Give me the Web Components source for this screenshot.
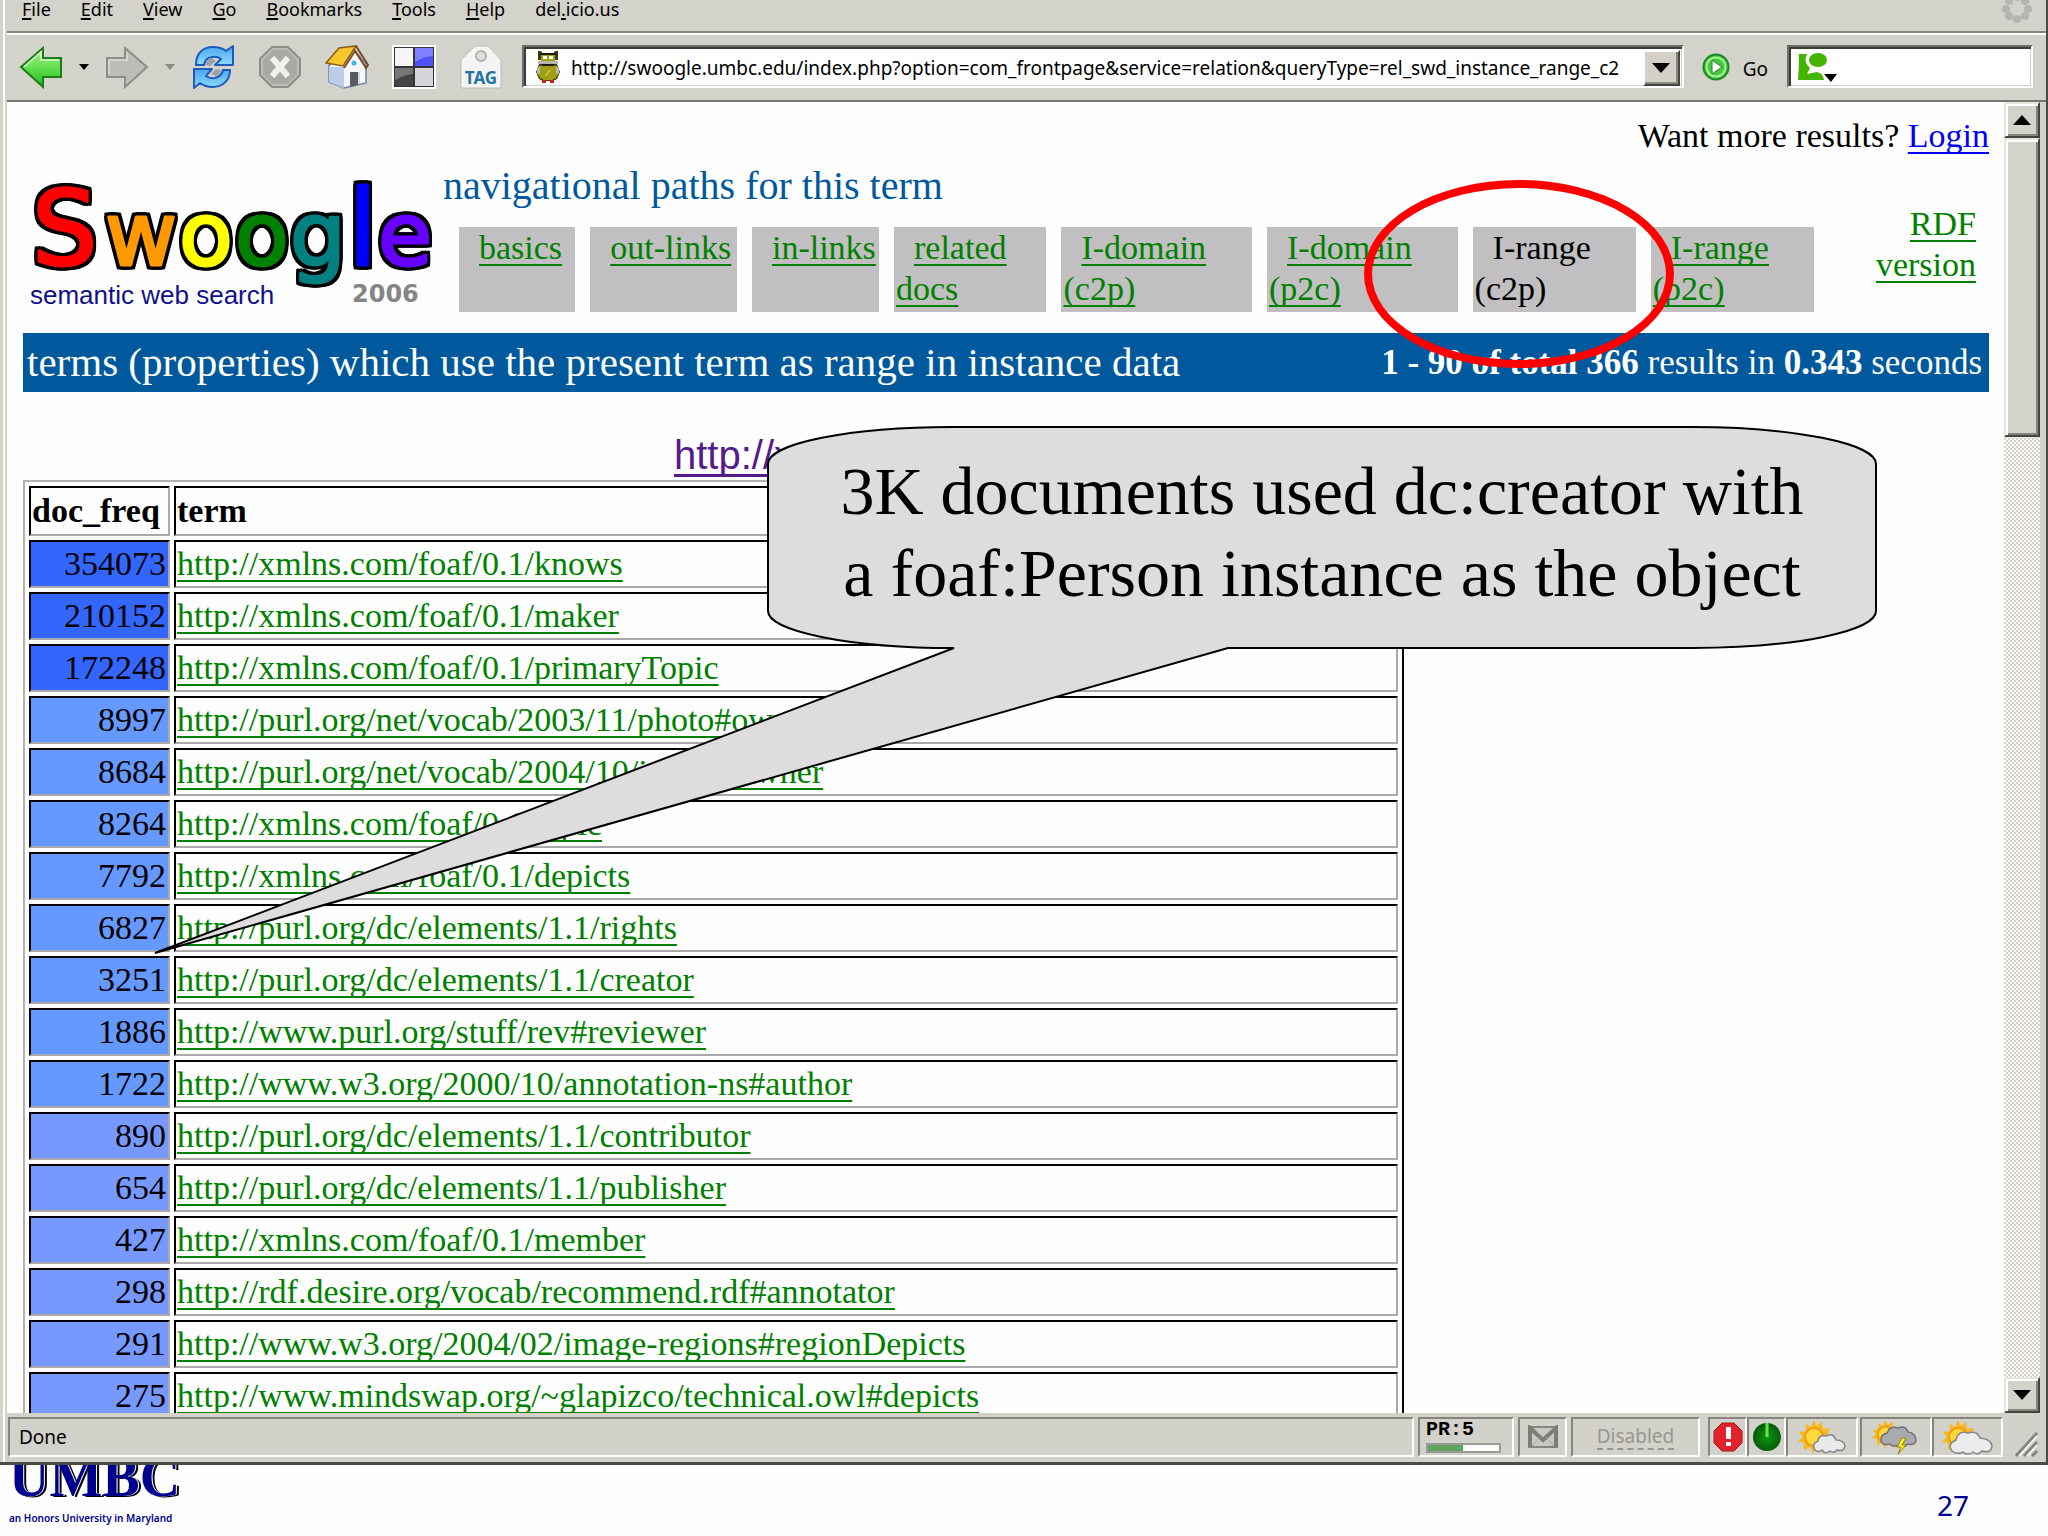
<!DOCTYPE html>
<html lang="en">
<head>
<meta charset="utf-8">
<title>Swoogle: navigational paths</title>
<style>
  html, body { height: 100%; margin: 0; }
  body { background: #fefefe; font-family: "Liberation Serif", "Times New Roman", serif; color: #000; overflow: hidden; }
</style>
</head>
<body>
<slide-page></slide-page>

<script>
const define = (name, html, setup) => customElements.define(name, class extends HTMLElement {
  constructor() {
    super();
    const root = this.attachShadow({ mode: 'open' });
    const t = document.createElement('template');
    t.innerHTML = html;
    root.append(t.content.cloneNode(true));
    if (setup) setup(root, this);
  }
});

/* ---------- menu bar ---------- */
define('menu-bar', `
<style>
  :host { display: block; height: 31px; border-bottom: 2px solid #85857e; box-shadow: 0 2px #fff; font: 18px/18px "Noto Sans", sans-serif; flex: none; }
  nav { display: flex; align-items: flex-start; padding-left: 15px; gap: 30px; }
  button { all: unset; }
  u { text-underline-offset: 2px; text-decoration-thickness: 2px; }
  .throbber { margin-left: auto; margin-right: 14px; display: block; }
</style>
<nav>
  <button><u>F</u>ile</button><button><u>E</u>dit</button><button><u>V</u>iew</button><button><u>G</u>o</button>
  <button><u>B</u>ookmarks</button><button><u>T</u>ools</button><button><u>H</u>elp</button><button>del<u>.</u>icio.us</button>
  <svg class="throbber" width="30" height="24" viewBox="0 0 30 24" fill="#b4b4b0">
    <circle cx="15" cy="-3" r="4"/><circle cx="23" cy="1" r="4"/><circle cx="26" cy="9" r="4"/><circle cx="23" cy="16" r="4"/>
    <circle cx="15" cy="19" r="4"/><circle cx="7" cy="16" r="4"/><circle cx="4" cy="9" r="4"/><circle cx="7" cy="1" r="4"/>
  </svg>
</nav>`);

/* ---------- tool bar ---------- */
define('tool-bar', `
<style>
  :host { display: flex; align-items: center; height: 67px; padding: 0 13px 0 12px; border-bottom: 2px solid #77776f; flex: none; font: 19px/24px "Noto Sans", sans-serif; }
  button { all: unset; display: block; flex: none; }
  svg { display: block; }
  .caret { margin: 0 14px; }
  .gap { margin-right: 23px; }
  .last { margin-right: 19px; }
  .field { display: flex; align-items: center; box-sizing: border-box; height: 43px; background: #fff; border: 2px solid; border-color: #6f6f68 #fff #fff #6f6f68; box-shadow: inset 2px 2px #3c3c3a, inset -1px -1px #d4d3cb; min-width: 0; }
  .url { flex: 1; padding-left: 12px; }
  .search { width: 246px; padding-left: 8px; flex: none; }
  input { all: unset; flex: 1; min-width: 0; color: #000; }
  .url input { margin: 3px 8px 0 11px; overflow: hidden; }
  .drop { width: 37px; height: 36px; margin: 2px 2px 0 0; box-sizing: border-box; background: #d4d0c8; border: 2px solid; border-color: #fff #444 #444 #fff; box-shadow: inset -2px -2px #88887f; display: grid; place-items: center; }
  .go { display: flex; align-items: center; gap: 13px; margin: 0 19px 0 18px; }
  .go span { padding-top: 4px; }
</style>
<button aria-label="Back"><svg width="44" height="44" viewBox="0 0 44 44"><defs><linearGradient id="g" x2="0" y2="1"><stop offset="0" stop-color="#a8f08a"/><stop offset=".5" stop-color="#64e050"/><stop offset="1" stop-color="#22b81a"/></linearGradient></defs><path d="M2 22 24 3v10h18v19H24v10Z" fill="url(#g)" stroke="#1f7d18" stroke-width="2"/><path d="M5 22 22 7v8h18" fill="none" stroke="#d8fccb" stroke-width="1.5"/></svg></button>
<svg class="caret" width="14" height="8" viewBox="0 0 14 8"><path d="M2 1h10L7 7Z"/></svg>
<button aria-label="Forward"><svg width="44" height="44" viewBox="0 0 44 44"><path d="M42 22 20 3v10H2v19h18v10Z" fill="#bdbcb8" stroke="#8d8d88" stroke-width="2"/><path d="M22 7v8H4v14" fill="none" stroke="#dcdbd6" stroke-width="1.5"/></svg></button>
<svg class="caret" width="14" height="8" viewBox="0 0 14 8"><path fill="#8a8a85" d="M2 1h10L7 7Z"/></svg>
<button class="gap" aria-label="Reload"><svg width="44" height="44" viewBox="0 0 44 44"><defs><linearGradient id="b" x2="0" y2="1"><stop offset="0" stop-color="#4ba6ee"/><stop offset="1" stop-color="#8fdcff"/></linearGradient></defs>
<g stroke="#1c5cbf" stroke-width="2" stroke-linejoin="round" fill="url(#b)"><path d="M5 20C5 8 12 2 22 2q8 0 13 4l7-5v19H24l6-6q-4-3-9-2-7 1-8 8Z"/><path d="M39 25c0 11-8 17-17 17q-8 0-13-4l-6 5V24h18l-6 7q4 3 9 2 7-2 8-8Z"/></g><path d="M14 20q2-6 7-7l4 3-6 5ZM30 25q-1 4-5 6l-5-2 5-5Z" fill="#9aa0ac"/></svg></button>
<button class="gap" aria-label="Stop"><svg width="44" height="44" viewBox="0 0 44 44"><path d="M14 2h16l12 12v16L30 42H14L2 30V14Z" fill="#bcbbb6" stroke="#8e8e89" stroke-width="2"/><path d="M15 5h14l10 10v14L29 39H15L5 29V15Z" fill="#aaa9a4"/><path d="m16 15 12 14M28 15 16 29" stroke="#f1f0ec" stroke-width="6" stroke-linecap="square"/></svg></button>
<button class="gap" aria-label="Home"><svg width="44" height="44" viewBox="0 0 44 44"><path d="M4 20v17l15 6 22-5V19L29 5Z" fill="#f4f7fc" stroke="#7083a8" stroke-width="1.5"/><path d="M4 22v15l15 6V22Z" fill="#bccbe6"/><path d="M1 18 14 3l17-2-13 20Z" fill="#f7c62b" stroke="#8b5c16" stroke-width="1.5"/><path d="M31 1 43 20l-2 3L30 6 19 23" fill="none" stroke="#7a4a22" stroke-width="2"/><path d="M25 27h8v13l-8 2Z" fill="#5b5a60"/><path d="M33 27h2v12h-2Z" fill="#d7d7da"/><circle cx="29" cy="18" r="2.5" fill="#3db4ea"/></svg></button>
<button class="gap" aria-label="del.icio.us"><svg width="44" height="44" viewBox="0 0 44 44"><path fill="#fff" d="M0 0h44v44H0z"/><path fill="#33333a" d="M2 2h40v40H2z"/><path fill="#f5f5f5" d="M3 3h18v18H3z"/><path fill="#5050f2" d="M23 3h18v18H23z"/><path fill="#8080ff" d="M23 3h18v8q-9 0-18 6z"/><path fill="#444" d="M3 23h18v18H3z"/><path fill="#777" d="M3 23h18v6q-9 1-18 6z"/><path fill="#d5d5da" d="M23 23h18v18H23z"/></svg></button>
<button class="last" aria-label="Tag"><svg width="44" height="44" viewBox="0 0 44 44"><path d="M2 43V15L14 3q2-2 4-2h9q2 0 4 2l11 12v28Z" fill="#f4f4f3" stroke="#bdbdbb"/><circle cx="22" cy="11" r="5" fill="#dededc" stroke="#b0b0ae" stroke-width="2"/><text x="22" y="39" text-anchor="middle" font-family="Noto Sans, sans-serif" font-size="17" font-weight="700" fill="#2173a6">TAG</text></svg></button>
<div class="field url">
  <svg width="24" height="32" viewBox="0 0 24 32"><path fill="#3a3a14" d="M2 0h3l2 3h10l2-3h3v9h-3v4h2l3 8-3 7-4 2H7l-4-2-3-7 3-8h2V9H2Z"/><path fill="#a0a012" d="M5 4h14v6H5zM3 15q9-3 18 0l2 6-3 6-4 2H8l-4-2-3-6Z"/><path fill="#b5b5ae" d="M2 10h20v3H2zM1 16h3v7H1zM20 16h3v7h-3z"/><path fill="#1b1b12" d="M4 2h16v2H4zM6 13h12v2H6z"/><path fill="#ffe" d="M7 5h4v3H7zM13 5h4v3h-4z"/><path fill="#c8c860" d="m9 24 5-6 1 1-5 6z"/><path fill="#c8211a" d="M6 29h4v3H6zM14 29h4v3h-4z"/></svg>
  <input aria-label="Address" value="http://swoogle.umbc.edu/index.php?option=com_frontpage&amp;service=relation&amp;queryType=rel_swd_instance_range_c2">
  <button class="drop" aria-label="Show history"><svg width="18" height="10" viewBox="0 0 18 10"><path d="M0 0h18L9 10Z"/></svg></button>
</div>
<button class="go"><svg width="28" height="28" viewBox="0 0 28 28"><circle cx="14" cy="14" r="12.5" fill="#48c83e" stroke="#1b8a22" stroke-width="2"/><circle cx="14" cy="14" r="9.5" fill="none" stroke="#a5f094" stroke-width="2"/><path d="M10 7v14l10-7Z" fill="#fff" stroke="#18801c"/></svg><span>Go</span></button>
<div class="field search">
  <svg width="42" height="30" viewBox="0 0 42 30"><path d="M2 2h8q-4 8 3 14l-3 6 10-2q6 1 7 8H1q1-13 1-26Z" fill="#44b400"/><ellipse cx="21" cy="8" rx="9" ry="7" fill="#44b400"/><path d="M27 22h13l-6 8Z"/></svg>
  <input aria-label="Search">
</div>`);

/* ---------- scroll bar ---------- */
define('scroll-bar', `
<style>
  :host { display: flex; flex-direction: column; width: 36px; flex: none; margin-right: 6px; background: repeating-conic-gradient(#fff 0 25%, #d4d0c8 0 50%) 0 0/4px 4px; }
  button { all: unset; display: grid; place-items: center; height: 36px; }
  button, .thumb { box-sizing: border-box; background: #d3d2cb; border: 2px solid; border-color: #e6e5e0 #44443f #44443f #e6e5e0; box-shadow: inset 2px 2px #fff, inset -2px -2px #85857e; }
  .thumb { height: 299px; }
  .track { flex: 1; }
</style>
<button aria-label="Scroll up"><svg width="18" height="10" viewBox="0 0 18 10"><path d="M0 10h18L9 0Z"/></svg></button>
<div class="thumb"></div><div class="track"></div>
<button aria-label="Scroll down"><svg width="18" height="10" viewBox="0 0 18 10"><path d="M0 0h18L9 10Z"/></svg></button>`);

/* ---------- Swoogle logo ---------- */
define('swoogle-logo', `
<style>
  :host { display: block; width: 410px; flex: none; }
  svg { display: block; overflow: visible; }
  .word { font-family: "DejaVu Sans", sans-serif; stroke-width: 3px; stroke-linejoin: round;
    filter: drop-shadow(3px 0 0 #000) drop-shadow(-3px 0 0 #000) drop-shadow(0 3px 0 #000) drop-shadow(0 -3px 0 #000); }
</style>
<svg width="410" height="130" viewBox="0 0 410 130" role="img" aria-label="Swoogle semantic web search 2006">
  <g class="word" font-size="88">
    <text y="84"><tspan x="9" font-size="103" fill="#f00" stroke="#f00">S</tspan><tspan x="82" fill="#ff9900" stroke="#ff9900">w</tspan><tspan x="156" fill="#ff0" stroke="#ff0">o</tspan><tspan x="212" fill="#008000" stroke="#008000">o</tspan><tspan x="267" fill="#008080" stroke="#008080">g</tspan><tspan x="325" font-size="106" fill="#00f" stroke="#00f">l</tspan><tspan x="355" fill="#60f" stroke="#60f">e</tspan></text>
  </g>
  <text x="7" y="123" font-family="Liberation Sans, sans-serif" font-size="26" fill="#10108c">semantic web search</text>
  <text x="329" y="121" font-family="DejaVu Sans, sans-serif" font-weight="700" font-size="24" fill="#858585">2006</text>
</svg>`);

/* ---------- navigation tab ---------- */
define('path-tab', `
<style>
  :host { display: block; box-sizing: border-box; height: 85px; background: #c1bfc1; padding: 0 2px; font-size: 34px; line-height: 41px; text-indent: 18px; flex: 1 1 0; color: #008000; }
  :host([current]) { color: #000; }
  a { color: inherit; text-decoration-thickness: 2px; text-underline-offset: 5px; text-decoration-skip-ink: none; }
</style>
<a><slot></slot></a>`, (root, host) => {
  if (!host.hasAttribute('current')) root.querySelector('a').href = '#';
});

/* ---------- results table ---------- */
const rows = [
  ['354073', 'http://xmlns.com/foaf/0.1/knows'],
  ['210152', 'http://xmlns.com/foaf/0.1/maker'],
  ['172248', 'http://xmlns.com/foaf/0.1/primaryTopic'],
  ['8997', 'http://purl.org/net/vocab/2003/11/photo#owner'],
  ['8684', 'http://purl.org/net/vocab/2004/10/image#owner'],
  ['8264', 'http://xmlns.com/foaf/0.1/topic'],
  ['7792', 'http://xmlns.com/foaf/0.1/depicts'],
  ['6827', 'http://purl.org/dc/elements/1.1/rights'],
  ['3251', 'http://purl.org/dc/elements/1.1/creator'],
  ['1886', 'http://www.purl.org/stuff/rev#reviewer'],
  ['1722', 'http://www.w3.org/2000/10/annotation-ns#author'],
  ['890', 'http://purl.org/dc/elements/1.1/contributor'],
  ['654', 'http://purl.org/dc/elements/1.1/publisher'],
  ['427', 'http://xmlns.com/foaf/0.1/member'],
  ['298', 'http://rdf.desire.org/vocab/recommend.rdf#annotator'],
  ['291', 'http://www.w3.org/2004/02/image-regions#regionDepicts'],
  ['275', 'http://www.mindswap.org/~glapizco/technical.owl#depicts']
];
const shade = n => n > 10000 ? '#3366ff' : n > 1000 ? '#6699ff' : '#7799ff';
define('term-table', `
<style>
  :host { display: block; width: 70.25%; }
  table { width: 100%; border-collapse: separate; border-spacing: 4px; border: 2px solid; border-color: #b3b1b3 #000 #000 #b3b1b3; font-size: 34px; line-height: 40px; box-sizing: border-box; }
  th, td { border: 2px solid; border-color: #000 #aaa8aa #aaa8aa #000; padding: 0 1px; height: 44px; white-space: nowrap; text-align: left; }
  th { height: 46px; }
  th:first-child, td:first-child { width: 134px; }
  td:first-child { text-align: right; padding-right: 2px; }
  a { color: #008000; text-decoration-thickness: 2px; text-underline-offset: 5px; text-decoration-skip-ink: none; }
</style>
<table><thead><tr><th>doc_freq</th><th>term</th></tr></thead><tbody></tbody></table>`, root => {
  root.querySelector('tbody').innerHTML = rows.map(([n, u]) =>
    `<tr><td style="background:${shade(+n)}">${n}</td><td><a href="#">${u}</a></td></tr>`).join('');
});

/* ---------- result page ---------- */
define('result-page', `
<style>
  :host { display: block; flex: 1; min-width: 0; overflow: hidden; background: #fefefe; padding: 0 15px 0 16px; font-size: 34px; line-height: 41px; }
  a { text-decoration-thickness: 2px; text-underline-offset: 5px; text-decoration-skip-ink: none; }
  .top { text-align: right; padding-top: 13px; }
  .top a { color: #00f; }
  header { display: flex; margin-top: 6px; }
  swoogle-logo { margin-top: 19px; }
  .paths { flex: 1; min-width: 0; padding-left: 10px; }
  h1 { margin: 0; font-weight: 400; font-size: 40px; line-height: 48px; color: #00599c; }
  .tabs { display: flex; gap: 15px; margin: 17px 0 0 16px; }
  .rdf { width: 175px; flex: none; padding: 41px 13px 0 0; box-sizing: border-box; text-align: right; }
  .rdf a { color: #008000; }
  .bar { display: flex; justify-content: space-between; align-items: center; height: 59px; margin-top: 21px; padding: 0 7px 0 4px; background: #00599c; color: #fff; white-space: nowrap; }
  h2 { margin: 0; font-weight: 400; font-size: 41px; }
  .bar span { font-size: 35px; }
  .subject { margin: 39px 0 0 651px; height: 49px; line-height: 48px; font-family: "Liberation Sans", Arial, sans-serif; font-size: 40px; white-space: nowrap; }
  .subject a { color: #551a8b; text-decoration-thickness: 3px; }
</style>
<div class="top">Want more results? <a href="#">Login</a></div>
<header>
  <swoogle-logo></swoogle-logo>
  <div class="paths">
    <h1>navigational paths for this term</h1>
    <div class="tabs">
      <path-tab style="flex-grow:115">basics</path-tab><path-tab style="flex-grow:146">out-links</path-tab><path-tab style="flex-grow:126">in-links</path-tab><path-tab style="flex-grow:152">related docs</path-tab><path-tab style="flex-grow:191">I-domain (c2p)</path-tab><path-tab style="flex-grow:191">I-domain (p2c)</path-tab><path-tab current style="flex-grow:163">I-range (c2p)</path-tab><path-tab style="flex-grow:163">I-range (p2c)</path-tab>
    </div>
  </div>
  <div class="rdf"><a href="#">RDF version</a></div>
</header>
<div class="bar"><h2>terms (properties) which use the present term as range in instance data</h2><span><b>1 - 90 of total 366</b> results in <b>0.343</b> seconds</span></div>
<div class="subject"><a href="#">http://xmlns.com/foaf/0.1/Person</a></div>
<term-table></term-table>`);

/* ---------- status bar ---------- */
const sun = '<path d="M17 1l3 6 5-4 1 7 7-1-3 6 6 3-6 3 3 6-7-1-1 7-5-4-4 5-3-6-6 3v-7l-6-2 5-4-4-5 7-1 0-7 5 3Z" fill="#f6b820"/><circle cx="17" cy="18" r="9" fill="#ffd83c" stroke="#f09a10" stroke-width="2"/>';
define('status-bar', `
<style>
  :host { display: flex; align-items: stretch; height: 40px; padding: 4px 0 5px 1px; gap: 4px; background: #d2d1ca; flex: none; font: 19px/24px "Noto Sans", sans-serif; }
  .p { display: flex; align-items: center; box-sizing: border-box; border: 2px solid; border-color: #85857e #fff #fff #85857e; flex: none; justify-content: center; }
  .done { flex: 1; justify-content: flex-start; padding-left: 9px; }
  .rank { width: 96px; flex-direction: column; align-items: flex-start; padding-left: 6px; font: 700 20px/18px "Liberation Mono", monospace; gap: 4px; }
  .meter { width: 75px; height: 10px; box-sizing: border-box; border: 2px solid #9a9a94; background: linear-gradient(90deg, #5fa35f 50%, #fff 0); }
  .mail { width: 49px; }
  .off { width: 129px; color: #96968f; }
  .off span { border-bottom: 2px dashed #96968f; line-height: 24px; }
  .icons { display: flex; margin-left: 4px; }
  .grip { align-self: flex-end; margin: 0 7px 0 8px; }
  svg { display: block; }
</style>
<div class="p done">Done</div>
<div class="p rank"><span>PR:5</span><div class="meter"></div></div>
<div class="p mail"><svg width="32" height="24" viewBox="0 0 32 24"><path d="M2 2h28v20H2z" fill="#c9c9c3" stroke="#85857f" stroke-width="2"/><path d="M3 22V3l13 12L29 3v19" fill="none" stroke="#7d7d78" stroke-width="4"/><path d="m5 21 8-9M27 21l-8-9" stroke="#a5a5a0"/></svg></div>
<div class="p off"><span>Disabled</span></div>
<div class="icons">
  <div class="p" style="width:39px"><svg width="30" height="30" viewBox="0 0 30 30"><path d="M9 1h12l8 8v12l-8 8H9l-8-8V9Z" fill="#e2232b" stroke="#a81c20"/><path d="M13 5h5v12h-5zM13 20h5v4h-5z" fill="#fff"/></svg></div>
  <div class="p" style="width:39px"><svg width="30" height="30" viewBox="0 0 30 30"><defs><radialGradient id="o"><stop offset="0" stop-color="#0d9c12"/><stop offset="1" stop-color="#045a08"/></radialGradient></defs><circle cx="15" cy="15" r="14" fill="url(#o)"/><path d="M15 15V1" stroke="#6fe04a" stroke-width="3"/></svg></div>
  <div class="p" style="width:72px"><svg width="50" height="36" viewBox="0 0 50 36">${sun}<path d="M18 31q-4-6 3-9 1-7 8-5 7-4 10 4 8 0 9 6-1 6-8 4-3 4-7 1-5 4-8-1-4 3-7 0Z" fill="#e9e9ec" stroke="#85858a" stroke-width="1.5"/></svg></div>
  <div class="p" style="width:72px;margin-left:2px"><svg width="50" height="36" viewBox="0 0 50 36"><g transform="scale(.85)">${sun}</g><path d="M10 22q-1-6 6-8 3-8 11-5 8-3 10 4 8 1 8 9-2 5-8 3-4 4-9 1-5 3-9-1-7 2-9-3Z" fill="#a9a9ae" stroke="#707075" stroke-width="1.5"/><path d="m31 19-5 9h4l-3 7 8-9h-4l4-7Z" fill="#ffee1c" stroke="#8d8512"/></svg></div>
  <div class="p" style="width:71px"><svg width="54" height="36" viewBox="0 0 54 36">${sun}<path d="M11 32q-5-7 4-11 2-10 12-7 9-3 12 5 11 1 12 8-1 8-10 5-4 5-9 1-6 4-10 0-6 3-11-1Z" fill="#ececef" stroke="#85858a" stroke-width="1.5"/></svg></div>
</div>
<svg class="grip" width="24" height="28" viewBox="0 0 24 28"><path d="M1 27 22 4M9 27l13-14M17 27l5-5" stroke="#85857e" stroke-width="3"/><path d="M4 27 22 7M12 27l10-11" stroke="#fff" stroke-width="1.5"/></svg>`);

/* ---------- browser window ---------- */
define('browser-window', `
<style>
  :host { display: flex; flex-direction: column; flex: 1; min-height: 0; background: #d3d2cb; border-bottom: 3px solid #4a4a48; border-right: 2px solid #4a4a48; box-shadow: inset 3px 0 #d3d2cb, inset 5px 0 #fff; padding: 0 0 0 7px; }
  main { display: flex; flex: 1; min-height: 0; }
</style>
<menu-bar></menu-bar>
<tool-bar></tool-bar>
<main><result-page></result-page><scroll-bar></scroll-bar></main>
<status-bar></status-bar>`);

/* ---------- speech callout ---------- */
define('speech-callout', `
<style>
  :host { display: block; position: absolute; left: 767px; top: 426px; width: 1110px; height: 223px; }
  svg { position: absolute; inset: 0; overflow: visible; }
  p { position: relative; margin: 0; padding: 24px 60px 0; text-align: center; font-size: 68px; line-height: 82px; }
</style>
<svg width="1110" height="223" viewBox="0 0 1110 223"><path d="M185 1H925A184 37 0 0 1 1109 38V185A184 37 0 0 1 925 222H461L-612 527 187 222A186 37 0 0 1 1 185V38A184 37 0 0 1 185 1Z" fill="#dedcdd" stroke="#000" stroke-width="2"/></svg>
<p><slot></slot></p>`);

/* ---------- red ring ---------- */
define('ring-mark', `
<style>
  :host { display: block; box-sizing: border-box; position: absolute; left: 1364px; top: 180px; width: 310px; height: 188px; border: 8px solid #f00; border-radius: 50%; }
</style>`);

/* ---------- slide footer ---------- */
define('slide-footer', `
<style>
  :host { display: flex; justify-content: space-between; align-items: flex-start; height: 71px; overflow: hidden; flex: none; color: #00008f; font-family: "Noto Sans", sans-serif; }
  .brand { padding-left: 9px; }
  .umbc { font: 700 56px/56px "Liberation Serif", serif; margin-top: -16px; height: 56px; text-shadow: 1px 0 #fff, 3px 1px #000; }
  .tag { font-size: 10px; line-height: 16px; font-weight: 600; margin-top: 5px; }
  .num { font-size: 28px; line-height: 36px; padding: 22px 79px 0 0; }
</style>
<div class="brand"><div class="umbc">UMBC</div><div class="tag">an Honors University in Maryland</div></div>
<div class="num">27</div>`);

define('slide-page', `
<style>:host { display: flex; flex-direction: column; height: 100vh; position: relative; overflow: hidden; }</style>
<browser-window></browser-window>
<slide-footer></slide-footer>
<ring-mark></ring-mark>
<speech-callout>3K documents used dc:creator with<br>a foaf:Person instance as the object</speech-callout>`);
</script>
</body>
</html>
